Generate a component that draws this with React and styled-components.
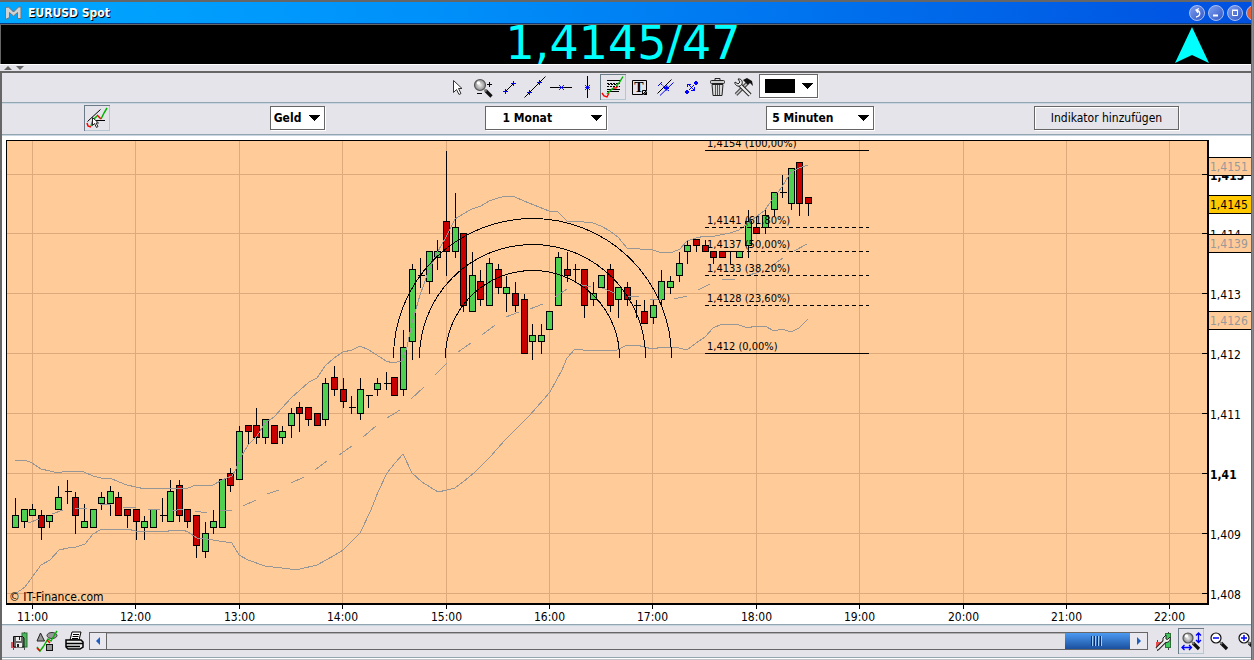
import React from "react";
import styled, { createGlobalStyle, css } from "styled-components";

const FONT = `"DejaVu Sans Condensed", "DejaVu Sans", sans-serif`;

// [high, body top, body bottom, low, up / down / flat], in pips above 1,40
const candles = [
  [96, 93, 91, 91, "u"], [94, 94, 92, 91, "u"], [95, 94, 93, 93, "u"], [94, 93, 91, 89, "d"],
  [93, 93, 92, 91, "u"], [98, 96, 94, 94, "u"], [99, 97, 97, 95, "f"], [97, 96, 93, 90, "d"],
  [95, 92, 91, 91, "u"], [94, 94, 91, 91, "u"], [97, 96, 95, 94, "u"], [98, 97, 95, 93, "u"],
  [97, 96, 93, 93, "d"], [94, 94, 93, 91, "d"], [94, 94, 92, 89, "d"], [93, 92, 91, 89, "u"],
  [94, 94, 91, 91, "u"], [96, 93, 93, 92, "f"], [99, 97, 92, 92, "u"], [99, 98, 93, 92, "d"],
  [94, 94, 92, 91, "d"], [93, 93, 88, 86, "d"], [92, 90, 87, 86, "u"], [94, 92, 91, 90, "u"],
  [99, 99, 91, 91, "u"], [101, 100, 98, 97, "d"], [108, 107, 99, 99, "u"], [108, 108, 107, 105, "d"],
  [111, 108, 106, 105, "d"], [109, 109, 106, 105, "u"], [108, 108, 105, 105, "d"], [108, 107, 106, 105, "u"],
  [111, 110, 108, 106, "u"], [112, 111, 110, 107, "d"], [111, 111, 109, 108, "d"], [110, 110, 108, 108, "d"],
  [116, 115, 109, 108, "u"], [118, 116, 114, 113, "d"], [116, 114, 112, 111, "d"], [113, 111, 111, 110, "f"],
  [116, 114, 110, 109, "u"], [113, 113, 113, 111, "f"], [116, 115, 114, 113, "u"], [117, 115, 115, 114, "f"],
  [116, 116, 113, 113, "d"], [124, 121, 114, 113, "u"], [135, 134, 122, 119, "u"], [136, 133, 133, 131, "f"],
  [137, 137, 132, 130, "u"], [139, 137, 136, 134, "u"], [154, 142, 137, 133, "d"], [147, 141, 137, 136, "u"],
  [140, 140, 128, 127, "d"], [137, 133, 127, 127, "u"], [134, 132, 129, 128, "d"], [136, 135, 128, 128, "u"],
  [135, 134, 131, 130, "d"], [133, 131, 130, 127, "u"], [132, 130, 128, 127, "d"], [130, 129, 120, 120, "d"],
  [125, 123, 122, 119, "u"], [125, 123, 122, 120, "u"], [127, 127, 124, 124, "u"], [137, 136, 128, 128, "u"],
  [137, 134, 133, 132, "d"], [135, 134, 134, 132, "f"], [134, 134, 128, 126, "d"], [132, 130, 129, 128, "u"],
  [133, 133, 131, 131, "u"], [135, 134, 128, 127, "d"], [131, 131, 129, 126, "u"], [132, 131, 129, 128, "d"],
  [129, 128, 128, 126, "f"], [129, 127, 125, 125, "d"], [129, 128, 126, 125, "u"], [134, 132, 129, 128, "u"],
  [133, 132, 131, 130, "u"], [137, 135, 133, 132, "u"], [139, 138, 137, 135, "u"], [139, 139, 138, 137, "d"],
  [139, 138, 137, 137, "d"], [137, 137, 136, 135, "d"], [137, 137, 136, 136, "d"], [137, 137, 137, 135, "f"],
  [137, 137, 136, 136, "u"], [144, 142, 138, 136, "u"], [143, 141, 140, 140, "d"], [144, 143, 141, 140, "u"],
  [147, 147, 144, 143, "u"], [150, 147, 147, 146, "f"], [151, 151, 145, 144, "u"], [152, 152, 145, 143, "d"],
  [146, 146, 145, 143, "d"]
];

const upperBand =
  "8,320 18,319 25,322 34,328 43,330 51,332 59,330 77,331 86,335 94,337 103,337 112,341 120,344 129,346 138,348 152,347 158,348 181,347 189,344 206,344 215,339 225,335 229,328 234,316 241,304 250,295 258,282 267,276 284,257 302,241 310,237 318,225 327,217 336,211 345,209 353,205 362,209 379,220 386,222 395,220 400,206 405,182 413,154 422,129 430,112 439,96 448,78 456,73 465,68 474,65 482,60 491,57 499,55 508,56 517,60 542,70 551,71 560,80 568,80 586,82 594,85 603,90 611,96 620,107 646,109 655,112 666,111 673,108 680,100 689,97 698,95 708,95 723,92 732,89 741,82 749,76 758,69 767,56 775,46 784,31 792,27 801,24";

const lowerBand =
  "8,453 18,446 34,424 43,419 52,409 61,407 69,406 78,403 86,393 95,388 120,388 129,390 160,391 163,389 176,389 181,391 190,397 206,399 225,402 232,414 241,419 258,425 283,428 293,428 310,424 328,414 336,409 353,392 364,369 371,351 380,332 388,322 396,313 405,332 415,341 431,351 440,349 448,347 456,341 468,331 483,316 498,299 523,274 543,251 555,229 560,217 568,208 576,209 610,209 620,204 630,204 637,206 646,208 655,206 663,206 672,207 680,209 689,202 698,196 706,187 715,183 732,184 741,187 748,185 758,185 767,190 775,188 784,191 792,187 801,178";

// moving average, [x1, y1, x2, y2] per dash
const average = [
  [21, 382, 32, 378], [45, 373, 56, 369], [68, 368, 80, 367], [93, 363, 104, 363],
  [116, 366, 129, 367], [141, 369, 153, 368], [164, 370, 176, 368], [188, 370, 200, 372],
  [213, 369, 225, 369], [236, 365, 249, 359], [260, 353, 272, 349], [284, 342, 297, 336],
  [308, 329, 320, 320], [332, 314, 345, 305], [356, 296, 369, 285], [380, 277, 393, 269],
  [404, 258, 417, 246], [428, 234, 440, 222], [451, 211, 464, 202], [475, 194, 488, 184],
  [499, 176, 512, 171], [523, 168, 536, 163], [548, 156, 560, 148], [571, 143, 584, 146],
  [595, 147, 608, 152], [620, 155, 632, 155], [643, 158, 655, 159], [667, 158, 680, 155],
  [691, 149, 703, 143], [715, 138, 728, 138], [739, 135, 752, 131], [763, 126, 776, 117],
  [787, 110, 800, 103]
];

const levels = [
  { pips: 154, label: "1,4154 (100,00%)", solid: true },
  { pips: 141, label: "1,4141 (61,80%)" },
  { pips: 137, label: "1,4137 (50,00%)" },
  { pips: 133, label: "1,4133 (38,20%)" },
  { pips: 128, label: "1,4128 (23,60%)" },
  { pips: 120, label: "1,412 (0,00%)", solid: true }
];

const prices = [
  { pips: 150, label: "1,415", bold: true },
  { pips: 140, label: "1,414" },
  { pips: 130, label: "1,413" },
  { pips: 120, label: "1,412" },
  { pips: 110, label: "1,411" },
  { pips: 100, label: "1,41", bold: true },
  { pips: 90, label: "1,409" },
  { pips: 80, label: "1,408" }
];

const tags = [
  { top: 17, label: "1,4151" },
  { top: 55, label: "1,4145", current: true },
  { top: 94, label: "1,4139" },
  { top: 171, label: "1,4126" }
];

const hours = ["11:00", "12:00", "13:00", "14:00", "15:00", "16:00", "17:00", "18:00", "19:00", "20:00", "21:00", "22:00"];

const yOf = pips => Math.floor(452 - (pips - 80) * 5.985) + 0.5;
const xOf = i => Math.round(8 + i * 8.62) + 0.5;
const hourX = i => Math.floor(25.5 + i * 103.4) + 0.5;

const GlobalStyle = createGlobalStyle`
  * {
    box-sizing: border-box;
  }
  body {
    margin: 0;
    background: #e4e4ea;
    font-family: ${FONT};
    font-size: 12px;
    color: #000;
    overflow: hidden;
  }
`;

const Desktop = styled.div`
  display: flex;
`;
const Window = styled.main`
  flex: 1;
  min-width: 0;
  border-top: 2px solid #666;
`;
const Edge = styled.div`
  width: 3px;
  border-left: 1px solid #666;
  border-right: 1px solid #3f87dc;
  background: #8c8c90;
`;
const TitleBar = styled.header`
  display: flex;
  align-items: center;
  height: 23px;
  padding-left: 5px;
  gap: 6px;
  overflow: hidden;
  background: linear-gradient(to right, #00a8ff, #0090fa 35%, #0050e0);
  border-bottom: 1px solid #666;
  box-shadow: inset 0 -1px 0 #0a3a80;
`;
const Title = styled.h1`
  flex: 1;
  margin: 0;
  font-size: 12px;
  font-weight: bold;
  color: #fff;
  text-shadow: 1px 1px 0 #000;
`;
const WindowButtons = styled.div`
  display: flex;
  gap: 3px;
  width: 62px;
  overflow: hidden;
`;
const RoundButton = styled.button`
  flex: none;
  display: flex;
  width: 16px;
  height: 16px;
  padding: 0;
  border: 1px solid #a9c0f4;
  border-radius: 50%;
  background: ${props => (props.$close ? "#e0603c" : "linear-gradient(135deg, #7f9df0, #3157c4)")};
`;
const Quote = styled.section`
  display: grid;
  grid-template-columns: 70px 1fr 76px;
  align-items: center;
  height: 39px;
  border-left: 1px solid #666;
  background: #000;
`;
const Price = styled.output`
  grid-column: 2;
  text-align: center;
  font-family: "DejaVu Sans", sans-serif;
  font-size: 46px;
  line-height: 36px;
  height: 39px;
  color: #0ff;
`;
const Splitter = styled.div`
  display: flex;
  align-items: center;
  gap: 4px;
  height: 9px;
  padding-left: 4px;
  border-top: 1px solid #fff;
  border-bottom: 2px solid #666;
`;
const Body = styled.div`
  border-left: 2px solid #666;
`;
const barLines = css`
  border-top: 1px solid #93a5b1;
  box-shadow: inset 0 1px 0 #c8d6e2;
`;
const Toolbar = styled.div`
  display: flex;
  justify-content: center;
  align-items: flex-start;
  height: 29px;
  padding: 1px 0 0 8px;
`;
const Tool = styled.button`
  flex: none;
  display: flex;
  width: 26px;
  height: 26px;
  padding: 0;
  border: none;
  background: none;
  overflow: hidden;
  ${props =>
    props.$active &&
    css`
      box-shadow: inset 1px 1px 0 #6b7c88, inset -1px -1px 0 #b4c6d2;
    `}
`;
const Settings = styled.div`
  ${barLines}
  display: flex;
  justify-content: space-between;
  align-items: center;
  height: 32px;
  padding: 0 72px 1px 82px;
`;
const SelectBox = styled.label`
  display: grid;
  align-items: center;
  width: ${props => props.$width}px;
  margin-left: ${props => props.$gap || 0}px;
`;
const Select = styled.select`
  grid-area: 1 / 1;
  appearance: none;
  width: 100%;
  height: 24px;
  padding: 0 0 0 ${props => props.$indent}px;
  border: 1px solid #666;
  border-radius: 0;
  background: #fff;
  box-shadow: 1px 1px 0 #fff;
  font-family: ${FONT};
  font-size: 12px;
  font-weight: bold;
  color: #000;
`;
const ColorSelect = styled(Select)`
  background: linear-gradient(#000, #000) 5px 4px / 30px 14px no-repeat #fff;
`;
const Caret = styled.svg`
  grid-area: 1 / 1;
  justify-self: end;
  margin-right: 5px;
  pointer-events: none;
`;
const AddButton = styled.button`
  width: 145px;
  height: 24px;
  padding: 0;
  border: 1px solid #666;
  background: #e4e4ea;
  box-shadow: 1px 1px 0 #fff, inset 1px 1px 0 #fff;
  font-family: ${FONT};
  font-size: 12px;
  color: #000;
`;
const ChartArea = styled.section`
  ${barLines}
  display: flex;
  background: #fff;
  padding: 5px 0 0 4px;
`;
const ChartColumn = styled.div`
  flex: 1;
  min-width: 0;
`;
const Plot = styled.svg`
  display: block;
  width: 100%;
  height: 465px;
  border: solid #000;
  border-width: 1px 2px 2px 1px;
  background: #fc9;
`;
const TimeAxis = styled.svg`
  display: block;
  width: 100%;
  height: 19px;
`;
const PriceAxis = styled.svg`
  display: block;
  flex: none;
  width: 42px;
  height: 484px;
`;
const Label = styled.text`
  font-family: ${FONT};
  font-size: ${props => props.$size || 12}px;
  font-weight: ${props => (props.$bold ? "bold" : "normal")};
  fill: ${props => props.$color || "#000"};
`;
const StatusBar = styled.footer`
  ${barLines}
  display: flex;
  align-items: center;
  height: 33px;
  padding-left: 3px;
  gap: 2px;
`;
const ZoomTools = styled.div`
  flex: none;
  display: flex;
  gap: 2px;
  width: 101px;
  overflow: hidden;
`;
const BottomLine = styled.div`
  height: 3px;
  border-top: 1px solid #93a5b1;
  border-bottom: 1px solid #c4c4c8;
  background: #fff;
`;
const Scroller = styled.div`
  flex: 1;
  display: flex;
  min-width: 0;
  height: 18px;
  border: 1px solid #666;
`;
const Arrow = styled.button`
  flex: none;
  display: flex;
  align-items: center;
  justify-content: center;
  width: 17px;
  padding: 0;
  border: solid #666;
  border-width: ${props => (props.$right ? "0" : "0 1px 0 0")};
  background: #e8e8ee;
`;
const Range = styled.input`
  appearance: none;
  flex: 1;
  min-width: 0;
  height: 16px;
  margin: 0;
  background: #e2e2e7;
  box-shadow: inset 0 1px 0 #b0b0b4;
  &::-webkit-slider-thumb {
    appearance: none;
    width: 65px;
    height: 16px;
    background: repeating-linear-gradient(to right, #0b2f70 0 1px, #9cd0ff 1px 2px, transparent 2px 3px) 26px 3px / 12px 10px
        no-repeat,
      linear-gradient(#4b9af2, #1b509e);
  }
`;

function Icon({ children, size = 26 }) {
  return (
    <svg width={size} height={size} viewBox={`0 0 ${size} ${size}`} aria-hidden="true">
      {children}
    </svg>
  );
}

function Plus({ x, y }) {
  return <path d={`M${x - 2} ${y + 0.5}h5M${x + 0.5} ${y - 2}v5`} stroke="#00f" />;
}

function Cross({ x, y }) {
  return <path d={`M${x - 2} ${y - 2}l5 5m0 -5l-5 5M${x - 2} ${y + 0.5}h5`} stroke="#00f" strokeWidth="0.9" />;
}

function DropDown({ label, width, indent, value }) {
  return (
    <SelectBox $width={width}>
      <Select $indent={indent} aria-label={label} defaultValue={value}>
        <option>{value}</option>
      </Select>
      <Down />
    </SelectBox>
  );
}

function Down() {
  return (
    <Caret width="11" height="6" shapeRendering="crispEdges">
      <path d="M0 0h11l-5.500 6z" />
    </Caret>
  );
}

function Magnifier({ x, y, r, filled }) {
  return (
    <>
      <path d={`M${x + r} ${y + r}l6 6`} stroke="#111" strokeWidth="3.200" />
      <path d={`M${x + r - 1} ${y + r - 1}l2 2`} stroke="#777" strokeWidth="2" />
      <circle cx={x} cy={y} r={r} fill={filled ? "url(#lens)" : "#fff"} stroke={filled ? "#555" : "#111"} strokeWidth="1.200" />
      {filled && <circle cx={x - 1.5} cy={y - 2} r="1.800" fill="#fff" />}
    </>
  );
}

const tools = [
  {
    name: "Auswahl",
    icon: <path d="M9.500 6.500v12l3 -3l2.500 5l2 -1l-2.500 -5h3.500z" fill="#fff" stroke="#333" />
  },
  {
    name: "Zoom",
    icon: (
      <>
        <Magnifier x={10} y={11} r={5.5} filled />
        <path d="M17 10.500h5M19.500 8v5M7 19.500h5" stroke="#000" />
      </>
    )
  },
  {
    name: "Segment",
    icon: (
      <>
        <path d="M9 18l9 -9" stroke="#000" />
        <Plus x={9} y={17} />
        <Plus x={17} y={9} />
      </>
    )
  },
  {
    name: "Gerade",
    icon: (
      <>
        <path d="M2.500 23.500l21 -21" stroke="#000" />
        <Plus x={7} y={18} />
        <Plus x={17} y={8} />
      </>
    )
  },
  {
    name: "Horizontale Linie",
    icon: (
      <>
        <path d="M2 13.500h22" stroke="#000" />
        <Cross x={13} y={13} />
      </>
    )
  },
  {
    name: "Vertikale Linie",
    icon: (
      <>
        <path d="M13.500 2v22" stroke="#000" />
        <Cross x={13} y={13} />
      </>
    )
  },
  {
    name: "Fibonacci",
    active: true,
    icon: (
      <>
        <path d="M7 6.500h14M7 17.500h12M7 15.500h13" stroke="#000" />
        <path d="M7 9.500h13M7 12.500h13M8 10.500h9" stroke="#000" strokeDasharray="2 1" />
        <path d="M2 19l2 3l3 1l2 -4M13 14l3 0l2 -2" stroke="#f00" fill="none" strokeWidth="1.400" />
        <path d="M7 20l5 -5l2 -1M16 12l3 -3l4 -6.500" stroke="#00b400" fill="none" strokeWidth="1.400" />
      </>
    )
  },
  {
    name: "Text",
    icon: (
      <>
        <path d="M6.500 6.500h14v10l-4 4h-10zM20.500 16.500h-4v4" fill="none" stroke="#000" />
        <path d="M17 21h4v-4z" />
        <text x="13" y="18" textAnchor="middle" fontFamily="Liberation Serif, serif" fontWeight="bold" fontSize="14">T</text>
      </>
    )
  },
  {
    name: "Kanal",
    icon: (
      <>
        <path d="M5.500 19.500l14 -14" stroke="#000" />
        <path d="M8 21.500l13.500 -13M6 12l4 -4" stroke="#00f" />
        <path d="M9 10l8 7" stroke="#00f" strokeDasharray="2 1" />
        <path d="M12 14h5M14.500 11.500v5" stroke="#00f" strokeWidth="2" />
      </>
    )
  },
  {
    name: "Retracement",
    icon: (
      <g fill="#00f" shapeRendering="crispEdges">
        <path d="M8 16h2v1h1v2h-1v1h-2v-1h-1v-2h1zM17 7h2v1h1v2h-1v1h-2v-1h-1v-2h1z" />
        <path d="M9 10h4v1h-1v1h1v1h1v1h1v1h1v-2h1v4h-4v-1h2v-1h-1v-1h-1v-1h-1v-1h-1v-1h-1v2h-1z" />
        <path d="M11 15h1v1h-1zM12 14h1v1h-1zM14 12h1v1h-1zM15 11h1v1h-1z" />
      </g>
    )
  },
  {
    name: "Löschen",
    icon: (
      <>
        <path d="M8 10.500h11l-1 11h-9z" fill="#d8d8d8" stroke="#222" />
        <path d="M11.500 11v10M13.500 11v10M15.500 11v10" stroke="#555" />
        <rect x="6.500" y="6.500" width="14" height="3" rx="1" fill="#ccc" stroke="#222" />
        <path d="M11 6v-1.500h5v1.500" fill="none" stroke="#222" />
      </>
    )
  },
  {
    name: "Werkzeuge",
    icon: (
      <>
        <path d="M6 20.500l11 -11" stroke="#222" strokeWidth="3.600" />
        <path d="M6 20.500l11 -11" stroke="#bbb" strokeWidth="1.800" />
        <path d="M13 6l4 -2l5 3l1 5l-3 -3l-2 2l-3 -3z" fill="#111" />
        <path d="M9 10l11 11" stroke="#222" strokeWidth="4.200" />
        <path d="M9 10l11 11" stroke="#eee" strokeWidth="2.200" />
        <path d="M5 8l3 2l2 -2l-2 -3c3 -.5 5 2 4 5c-1 2 -4 3 -6 1c-1 -1 -1.500 -2 -1 -3z" fill="#eee" stroke="#222" />
      </>
    )
  }
];

function Candle({ data, index }) {
  const [high, top, bottom, low, kind] = data;
  const x = xOf(index);
  return (
    <g stroke="#000">
      <path d={`M${x} ${yOf(high)}V${yOf(low)}`} />
      {kind === "f" ? (
        <path d={`M${x - 3} ${yOf(top)}h7`} />
      ) : (
        <rect x={x - 3} y={yOf(top)} width="6" height={yOf(bottom) - yOf(top)} fill={kind === "u" ? "#50d050" : "#c80000"} />
      )}
    </g>
  );
}

function PriceChart() {
  return (
    <ChartArea>
      <ChartColumn>
        <Plot role="img" aria-label="EURUSD Spot">
          <g stroke="#deaa7c" shapeRendering="crispEdges">
            {prices.map(p => <line key={p.label} x1="0" x2="100%" y1={yOf(p.pips)} y2={yOf(p.pips)} />)}
            {hours.map((hour, i) => <line key={hour} x1={hourX(i)} x2={hourX(i)} y1="0" y2="100%" />)}
          </g>
          <g shapeRendering="crispEdges">
            {candles.map((data, i) => <Candle key={i} data={data} index={i} />)}
          </g>
          <g fill="none" stroke="#969696" shapeRendering="crispEdges">
            <polyline points={upperBand} />
            <polyline points={lowerBand} />
            {average.map(([x1, y1, x2, y2]) => <line key={x1} x1={x1} y1={y1} x2={x2} y2={y2} />)}
          </g>
          <g fill="none" stroke="#000" shapeRendering="crispEdges">
            {[139, 113, 87].map(r => (
              <path key={r} d={`M${525.5 - r} 216.500a${r} ${r} 0 0 1 ${r * 2} 0`} />
            ))}
          </g>
          {levels.map(level => (
            <g key={level.label}>
              <path
                d={`M698 ${yOf(level.pips)}h164`}
                stroke="#000"
                strokeDasharray={level.solid ? "none" : "4 3"}
                shapeRendering="crispEdges"
              />
              <Label x="700" y={yOf(level.pips) - 3.5} $size={11}>{level.label}</Label>
            </g>
          ))}
          <Label x="2" y="460">© IT-Finance.com</Label>
        </Plot>
        <TimeAxis>
          {hours.map((hour, i) => (
            <g key={hour}>
              <path d={`M${hourX(i) + 1} 0v4`} stroke="#000" />
              <Label x={hourX(i) + 1} y="16" textAnchor="middle">{hour}</Label>
            </g>
          ))}
        </TimeAxis>
      </ChartColumn>
      <PriceAxis overflow="visible">
        {prices.map(p => (
          <g key={p.label}>
            <path d={`M-7 ${yOf(p.pips) + 1}h6`} stroke="#000" />
            <Label x="1" y={yOf(p.pips) + 6.5} $bold={p.bold}>{p.label}</Label>
          </g>
        ))}
        {tags.map(tag => (
          <g key={tag.label}>
            <rect x="0" y={tag.top} width="42" height="19" fill={tag.current ? "#ffc800" : "#fc9"} />
            <path d={`M0 ${tag.top + 0.5}h42m0 18h-42`} stroke="#000" />
            <Label x="1" y={tag.top + 14} $color={tag.current ? "#000" : "#999"}>{tag.label}</Label>
          </g>
        ))}
      </PriceAxis>
    </ChartArea>
  );
}

export default function App() {
  return (
    <Desktop>
      <GlobalStyle />
      <Window>
        <TitleBar>
          <svg width="17" height="14" viewBox="0 0 17 14" aria-hidden="true">
            <defs>
              <radialGradient id="lens">
                <stop offset="0" stopColor="#eee" />
                <stop offset="1" stopColor="#8a8a8a" />
              </radialGradient>
            </defs>
            <path d="M0.500 1.500l3 -.5l5 5l5 -5l2.500 0v11.500h-3.500v-6l-4 3.500l-4 -3.500v5l-4 2z" fill="#d2d2d2" stroke="#70757c" />
          </svg>
          <Title>EURUSD Spot</Title>
          <WindowButtons>
            <RoundButton aria-label="Andocken">
              <Icon size={14}>
                <path d="M6 11c5 -1 5 -6 0 -7M9 2.500l-3 1.500l2 3" fill="none" stroke="#fff" strokeWidth="1.300" />
              </Icon>
            </RoundButton>
            <RoundButton aria-label="Minimieren">
              <Icon size={14}>
                <path d="M4 9.500h5" stroke="#fff" strokeWidth="2" />
              </Icon>
            </RoundButton>
            <RoundButton aria-label="Maximieren">
              <Icon size={14}>
                <path d="M4.500 4.500h5v5h-5zM4 4h6" fill="none" stroke="#fff" />
              </Icon>
            </RoundButton>
            <RoundButton $close aria-label="Schließen" />
          </WindowButtons>
        </TitleBar>
        <Quote>
          <Price>1,4145/47</Price>
          <svg width="34" height="37" viewBox="0 0 34 37" aria-hidden="true">
            <path d="M17 1l17 36l-17 -8l-17 8z" fill="#0ff" />
          </svg>
        </Quote>
        <Splitter>
          <svg width="8" height="4" aria-hidden="true"><path d="M0 4h8l-4 -4z" fill="#666" /></svg>
          <svg width="8" height="4" aria-hidden="true"><path d="M0 0h8l-4 4z" fill="#666" /></svg>
        </Splitter>
        <Body>
          <Toolbar>
            {tools.map(tool => (
              <Tool key={tool.name} $active={tool.active} aria-label={tool.name}>
                <Icon>{tool.icon}</Icon>
              </Tool>
            ))}
            <SelectBox $width={59} $gap={3}>
              <ColorSelect aria-label="Farbe">
                <option value="#000000" aria-label="Schwarz" />
              </ColorSelect>
              <Down />
            </SelectBox>
          </Toolbar>
          <Settings>
            <Tool $active aria-label="Zeichnen">
              <Icon>
                <path d="M3.500 16.500l13 -12M12 15.500h9" stroke="#000" />
                <path d="M3 18l1 3l3 1M13 10l4 4" stroke="#f00" fill="none" strokeWidth="1.500" />
                <path d="M7 21l2 -6l4 -4M17 14l3 -6l3 -5" stroke="#00b400" fill="none" strokeWidth="1.500" />
                <path d="M8.500 12.500v8l2 -2l2 4l1.500 -1l-2 -3.500h2.500z" fill="#fff" stroke="#222" />
              </Icon>
            </Tool>
            <DropDown label="Kurs" width={55} indent={3} value="Geld" />
            <DropDown label="Zeitraum" width={122} indent={17} value="1 Monat" />
            <DropDown label="Intervall" width={108} indent={5} value="5 Minuten" />
            <AddButton>Indikator hinzufügen</AddButton>
          </Settings>
          <PriceChart />
          <StatusBar>
            <Tool aria-label="Speichern">
              <Icon>
                <path d="M8.500 12v10M19.500 4v18" stroke="#555" />
                <rect x="6" y="14" width="5" height="6" fill="#e05060" />
                <rect x="17" y="5" width="5" height="14" fill="#4cb85c" stroke="#2c7038" />
                <path d="M8.500 8.500h9l1.500 1.500v9h-10.500z" fill="#666" stroke="#111" />
                <path d="M11 9h5v4h-5zM11 15h6v4h-6z" fill="#eee" />
                <path d="M14 9h1v3h-1zM12 16h2v3h-2z" fill="#222" />
              </Icon>
            </Tool>
            <Tool aria-label="Objekte">
              <Icon>
                <path d="M7.500 5l4 8h-7.500z" fill="#999" stroke="#222" />
                <ellipse cx="19" cy="7.500" rx="5" ry="3" fill="#999" stroke="#333" />
                <rect x="13.500" y="16.500" width="6" height="6" fill="#999" stroke="#111" />
                <path d="M4 19l3 4l3 -4l5 -8l3 2l4 -7l2 -3" fill="none" stroke="#00b400" strokeWidth="1.400" />
                <path d="M4 20l3 3M14 12l3 3" stroke="#f00" strokeWidth="1.600" />
              </Icon>
            </Tool>
            <Tool aria-label="Drucken">
              <Icon>
                <path d="M9 12l2 -8h9l-2 8z" fill="#fff" stroke="#000" />
                <path d="M12 6.500h6M11.500 8.500h6M11 10.500h6" stroke="#000" />
                <path d="M5 12h15l2 2v5l-3 2h-12l-2 -2z" fill="#eee" stroke="#000" strokeWidth="1.500" />
                <path d="M5 15.500h17M5 18.500h14" stroke="#000" strokeWidth="1.500" />
              </Icon>
            </Tool>
            <Scroller>
              <Arrow aria-label="Zurück">
                <svg width="4" height="8"><path d="M4 0v8l-4 -4z" fill="#1c5fc0" /></svg>
              </Arrow>
              <Range type="range" aria-label="Zeitachse" min="0" max="100" defaultValue="100" />
              <Arrow $right aria-label="Vor">
                <svg width="4" height="8"><path d="M0 0v8l4 -4z" fill="#1c5fc0" /></svg>
              </Arrow>
            </Scroller>
            <ZoomTools>
              <Tool aria-label="Einstellungen">
                <Icon>
                  <path d="M7.500 12v11M18.500 4v18" stroke="#444" />
                  <rect x="6" y="14" width="5" height="6" fill="#e84c4c" />
                  <rect x="15.500" y="5.500" width="5" height="14" fill="#3fc85c" stroke="#2c7038" />
                  <path d="M7 21l8 -8" stroke="#222" strokeWidth="4.200" />
                  <path d="M13 14v-4l3 -3v4l1.500 .5l2.500 -2.500c1 3 -1 5.500 -4 5.500z" fill="#eee" stroke="#222" />
                  <path d="M7 21l8 -8" stroke="#eee" strokeWidth="2.200" />
                </Icon>
              </Tool>
              <Tool $active aria-label="Autozoom">
                <Icon>
                  <Magnifier x={10} y={10} r={5} filled />
                  <path d="M20.500 5v9M4 19.500h9M18 7.500l2.500 -2.500l2.500 2.500M18 12l2.500 2.500l2.500 -2.500M6.500 17l-2.500 2.500l2.500 2.500M11 17l2.500 2.500l-2.500 2.500" fill="none" stroke="#00f" strokeWidth="1.300" />
                </Icon>
              </Tool>
              <Tool aria-label="Verkleinern">
                <Icon>
                  <Magnifier x={10} y={10} r={5} />
                  <path d="M7 10h6" stroke="#00f" strokeWidth="1.500" />
                </Icon>
              </Tool>
              <Tool aria-label="Vergrößern">
                <Icon>
                  <Magnifier x={10} y={10} r={5} />
                  <path d="M7 10h6M10 7v6" stroke="#00f" strokeWidth="1.500" />
                </Icon>
              </Tool>
            </ZoomTools>
          </StatusBar>
          <BottomLine />
        </Body>
      </Window>
      <Edge />
    </Desktop>
  );
}
